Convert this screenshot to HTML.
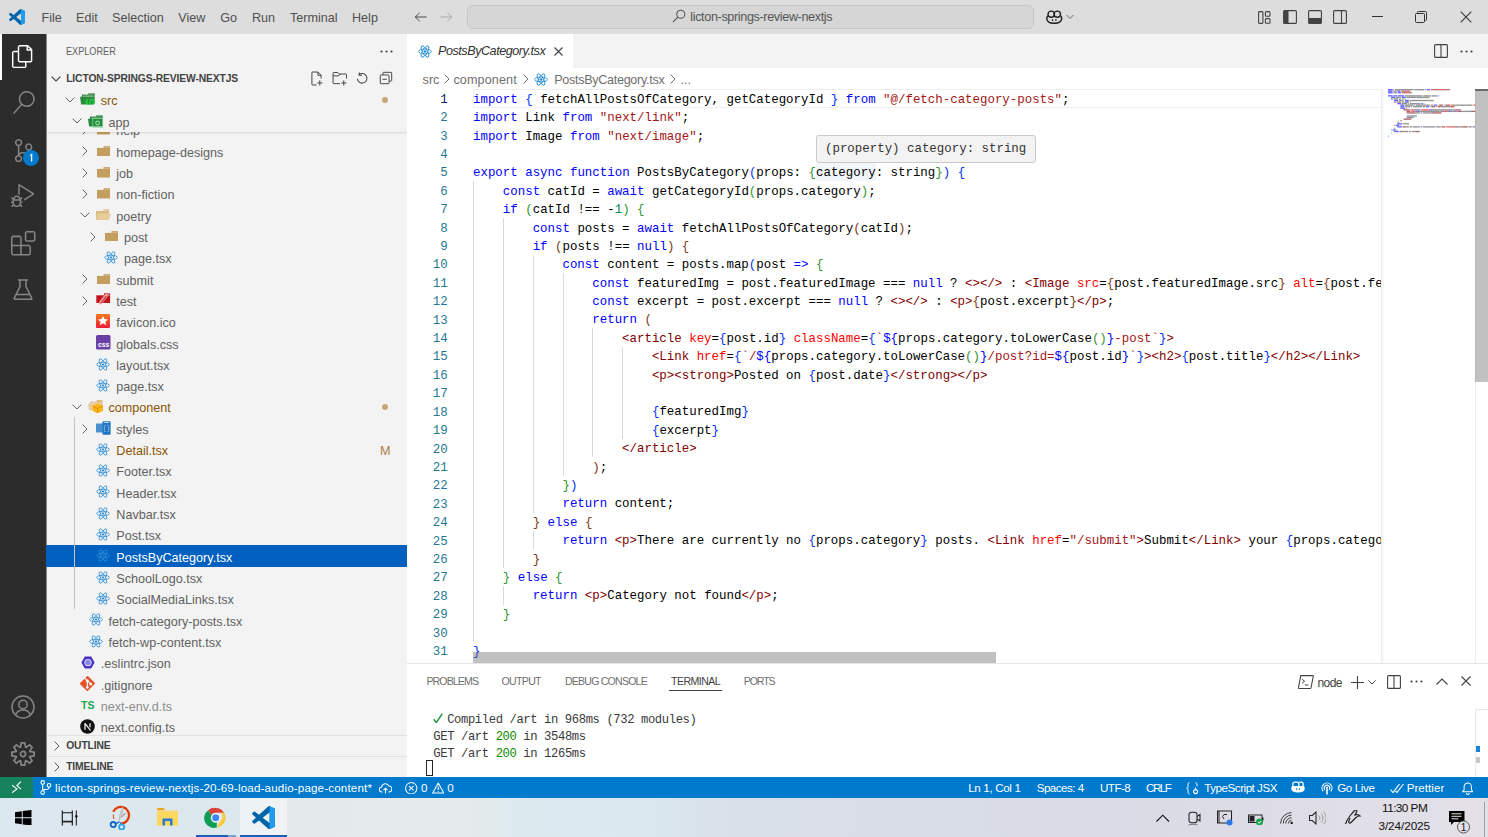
<!DOCTYPE html>
<html><head><meta charset="utf-8">
<style>
*{box-sizing:border-box;margin:0;padding:0}
html,body{width:1488px;height:837px;overflow:hidden;background:#fff;font-family:"Liberation Sans",sans-serif;position:relative}
.a{position:absolute}
svg{display:block}
#title{left:0;top:0;width:1488px;height:34px;background:#dddddd}
.menu{top:11px;font-size:12.6px;line-height:15px;color:#4f4f4f}
#act{left:0;top:34px;width:46px;height:743px;background:#2c2c2c}
#side{left:46px;top:34px;width:361px;height:743px;background:#f3f3f3;overflow:hidden}
#tabs{left:407px;top:34px;width:1081px;height:34px;background:#f3f3f3}
#editor{left:407px;top:68px;width:1081px;height:595px;background:#fff;overflow:hidden}
#panel{left:407px;top:663px;width:1081px;height:114px;background:#fff;border-top:1px solid #e5e5e5}
#status{left:0;top:777px;width:1488px;height:21px;background:#007acc}
#task{left:0;top:798px;width:1488px;height:39px;background:linear-gradient(90deg,#dbe7ee 0px,#dde8ee 240px,#e4e9ea 300px,#e5eaea 470px,#dceaf0 520px,#dae8ef 640px,#d9e0ea 730px,#d9dde8 900px,#d9dbe5 1150px,#e0dee7 1350px,#e3e0e8 1488px)}
</style></head><body>
<style>
.tx{font-size:12.6px;line-height:21.3px;white-space:nowrap}
.ic{width:16px;height:16px;display:flex;align-items:center;justify-content:center}
</style>
<style>
.bc{font-size:12.6px;line-height:15px;color:#6f6f6f;white-space:nowrap}
.code{font-family:"Liberation Mono",monospace;font-size:12.43px;white-space:pre;color:#000;width:908px;overflow:hidden}
.cl{height:18.406px;line-height:18.406px}
.ln{left:0;width:40.7px;text-align:right;font-family:"Liberation Mono",monospace;font-size:12.43px;line-height:18.406px}
.k{color:#0000ff}.b1{color:#0431fa}.b2{color:#319331}.b3{color:#7b3814}.s{color:#a31515}.n{color:#098658}.t{color:#800000}.at{color:#ff0000}
.hover{background:#f3f3f3;border:1px solid #c8c8c8;border-radius:3px;font-family:"Liberation Mono",monospace;font-size:12.43px;line-height:26px;padding-left:8px;color:#333;white-space:pre}
</style>
<style>
.term{font-family:"Liberation Mono",monospace;font-size:12.2px;letter-spacing:-0.39px;line-height:16.95px;color:#3a3a3a;white-space:pre}
</style>
<div id="title" class="a">
 <svg class="a" style="left:9px;top:9px" width="16" height="16" viewBox="0 0 100 100"><path fill="#0065a9" d="M96.5 10.8 75.9.9a6.2 6.2 0 0 0-7.1 1.2L29.4 38 12.2 25a4.1 4.1 0 0 0-5.3.2L1.4 30.3a4.1 4.1 0 0 0 0 6.1L16.3 50 1.4 63.6a4.1 4.1 0 0 0 0 6.1l5.5 5a4.1 4.1 0 0 0 5.3.2l17.2-13 39.4 35.9a6.2 6.2 0 0 0 7.1 1.2l20.6-9.9a6.2 6.2 0 0 0 3.5-5.6V16.4a6.2 6.2 0 0 0-3.5-5.6ZM75 72.7 45.1 50 75 27.3Z"/><path fill="#007acc" d="M96.5 89.2 75.9 99.1a6.2 6.2 0 0 1-7.1-1.2L75 72.7V27.3L68.8 2.1A6.2 6.2 0 0 1 75.9.9l20.6 9.9a6.2 6.2 0 0 1 3.5 5.6v67.2a6.2 6.2 0 0 1-3.5 5.6Z" opacity=".0"/><path fill="#1f9cf0" d="M75.9 99.1a6.2 6.2 0 0 1-7.1-1.2c2.3 2.3 6.2.7 6.2-2.6V4.7c0-3.3-3.9-4.9-6.2-2.6a6.2 6.2 0 0 1 7.1-1.2l20.6 9.9a6.2 6.2 0 0 1 3.5 5.6v67.2a6.2 6.2 0 0 1-3.5 5.6Z"/></svg>
 <div class="a menu" style="left:41.5px">File</div>
 <div class="a menu" style="left:76px">Edit</div>
 <div class="a menu" style="left:112px">Selection</div>
 <div class="a menu" style="left:178.3px">View</div>
 <div class="a menu" style="left:220.3px">Go</div>
 <div class="a menu" style="left:251.9px">Run</div>
 <div class="a menu" style="left:290px">Terminal</div>
 <div class="a menu" style="left:352px">Help</div>
 <svg class="a" style="left:414px;top:10px" width="14" height="14" viewBox="0 0 16 16"><path d="M1.5 8h13M1.5 8l5-5M1.5 8l5 5" stroke="#424242" stroke-width="1.1" fill="none"/></svg>
 <svg class="a" style="left:439px;top:10px" width="14" height="14" viewBox="0 0 16 16"><path d="M14.5 8h-13M14.5 8l-5-5M14.5 8l-5 5" stroke="#a8a8a8" stroke-width="1.1" fill="none"/></svg>
 <div class="a" style="left:467px;top:5px;width:567px;height:24px;border:1px solid #c6c6c6;border-radius:6px;background:#d6d6d6"></div>
 <svg class="a" style="left:672px;top:9px" width="14" height="14" viewBox="0 0 16 16"><circle cx="10" cy="6" r="4.6" stroke="#555" stroke-width="1.2" fill="none"/><path d="M6.7 9.3 1 15" stroke="#555" stroke-width="1.3"/></svg>
 <div class="a" style="left:690.3px;top:9.5px;font-size:12.6px;color:#555;line-height:15px;letter-spacing:-0.355px">licton-springs-review-nextjs</div>
 <svg class="a" style="left:1046px;top:10px" width="16.5" height="14" viewBox="0 0 16.5 14"><ellipse cx="5.2" cy="4.2" rx="3.2" ry="3.1" fill="none" stroke="#222" stroke-width="1.4"/><ellipse cx="11.3" cy="4.2" rx="3.2" ry="3.1" fill="none" stroke="#222" stroke-width="1.4"/><path d="M2 5.8C1 6.3.8 7.3.8 8.6c0 2.8 3.2 4.7 7.45 4.7s7.45-1.9 7.45-4.7c0-1.3-.2-2.3-1.2-2.8" fill="none" stroke="#222" stroke-width="1.5"/><path d="M6.6 9.2v1.8M9.9 9.2v1.8" stroke="#222" stroke-width="1.2"/></svg>
 <svg class="a" style="left:1066px;top:14px" width="8" height="6" viewBox="0 0 8 6"><path d="M.5 1 4 4.5 7.5 1" fill="none" stroke="#666" stroke-width="1"/></svg>
 <!-- layout icons -->
 <svg class="a" style="left:1258px;top:11px" width="13" height="13" viewBox="0 0 13 13"><rect x=".6" y=".6" width="4.3" height="11.8" rx=".8" fill="none" stroke="#424242" stroke-width="1.1"/><rect x="7.4" y=".6" width="4.6" height="4.6" rx="1" fill="none" stroke="#424242" stroke-width="1.1"/><rect x="7.4" y="7.6" width="4.6" height="4.6" rx="1" fill="none" stroke="#424242" stroke-width="1.1"/></svg>
 <svg class="a" style="left:1283px;top:10px" width="14" height="14" viewBox="0 0 14 14"><rect x=".6" y=".6" width="12.8" height="12.8" rx="1" fill="none" stroke="#424242" stroke-width="1.1"/><rect x="1" y="1" width="4.5" height="12" fill="#424242"/></svg>
 <svg class="a" style="left:1308px;top:10px" width="14" height="14" viewBox="0 0 14 14"><rect x=".6" y=".6" width="12.8" height="12.8" rx="1" fill="none" stroke="#424242" stroke-width="1.1"/><rect x="1" y="8" width="12" height="5" fill="#424242"/></svg>
 <svg class="a" style="left:1333px;top:10px" width="14" height="14" viewBox="0 0 14 14"><rect x=".6" y=".6" width="12.8" height="12.8" rx="1" fill="none" stroke="#424242" stroke-width="1.1"/><path d="M8.5 1v12" stroke="#424242" stroke-width="1.1"/></svg>
 <div class="a" style="left:1372px;top:16px;width:11px;height:1px;background:#333"></div>
 <svg class="a" style="left:1415px;top:11px" width="12" height="12" viewBox="0 0 12 12"><rect x=".5" y="2.5" width="9" height="9" rx="1" fill="none" stroke="#333" stroke-width="1"/><path d="M2.5 2.5V1.5a1 1 0 0 1 1-1h7a1 1 0 0 1 1 1v7a1 1 0 0 1-1 1h-1" fill="none" stroke="#333" stroke-width="1"/></svg>
 <svg class="a" style="left:1460px;top:11px" width="12" height="12" viewBox="0 0 12 12"><path d="M.7.7l10.6 10.6M11.3.7.7 11.3" stroke="#333" stroke-width="1.05"/></svg>
</div>
<div id="act" class="a">
 <div class="a" style="left:0;top:0;width:2px;height:46px;background:#fff"></div>
 <svg class="a" style="left:11px;top:11px" width="23.25" height="23.25" viewBox="0 0 24 24"><path fill="#fff" d="M17.5 0h-9L7 1.5V6H2.5L1 7.5v15.07L2.5 24h12.07L16 22.57V18h4.7l1.3-1.43V4.5L17.5 0zm0 2.12l2.38 2.38H17.5V2.12zm-3 20.38h-12v-15H7v9.07L8.5 18h6v4.5zm6-6h-12v-15H16V6h4.5v10.5z"/></svg>
 <svg class="a" style="left:12px;top:57px" width="23.25" height="23.25" viewBox="0 0 24 24"><path fill="#858585" d="M15.25 0a8.25 8.25 0 0 0-6.18 13.72L1 22.88l1.12 1 8.05-9.12A8.251 8.251 0 1 0 15.25.01V0zm0 15a6.75 6.75 0 1 1 0-13.5 6.75 6.75 0 0 1 0 13.5z"/></svg>
 <svg class="a" style="left:11.7px;top:105px" width="23.25" height="23.25" viewBox="0 0 24 24"><path fill="#858585" d="M21.007 8.222A3.738 3.738 0 0 0 15.045 5.2a3.737 3.737 0 0 0 1.156 6.583 2.988 2.988 0 0 1-2.668 1.67h-2.99a4.456 4.456 0 0 0-2.989 1.165V7.4a3.737 3.737 0 1 0-1.494 0v9.117a3.776 3.776 0 1 0 1.816.099 2.99 2.99 0 0 1 2.668-1.667h2.99a4.484 4.484 0 0 0 4.223-3.039 3.736 3.736 0 0 0 3.25-3.687zM4.565 3.738a2.242 2.242 0 1 1 4.484 0 2.242 2.242 0 0 1-4.484 0zm4.484 16.441a2.242 2.242 0 1 1-4.484 0 2.242 2.242 0 0 1 4.484 0zm8.221-9.715a2.242 2.242 0 1 1 0-4.485 2.242 2.242 0 0 1 0 4.485z"/></svg>
 <svg class="a" style="left:23px;top:116px" width="16" height="16" viewBox="0 0 16 16"><circle cx="8" cy="8" r="8" fill="#007acc"/><path d="M7.2 5.6 8.6 4.6V11.6" fill="none" stroke="#fff" stroke-width="1.3"/></svg>
 <svg class="a" style="left:11px;top:150px" width="23.25" height="23.25" viewBox="0 0 24 24"><path fill="#858585" d="M10.94 13.5l-1.32 1.32a3.73 3.73 0 0 0-7.24 0L1.06 13.5 0 14.56l1.72 1.72-.22.22V18H0v1.5h1.5v.08c.077.489.214.966.41 1.42L0 22.94 1.06 24l1.65-1.65A4.308 4.308 0 0 0 6 24a4.31 4.31 0 0 0 3.29-1.65L10.94 24 12 22.94 10.09 21c.198-.464.336-.951.41-1.45v-.1H12V18h-1.5v-1.5l-.22-.22L12 14.56l-1.06-1.06zM6 13.5a2.25 2.25 0 0 1 2.25 2.25h-4.5A2.25 2.25 0 0 1 6 13.5zm3 6a3.33 3.33 0 0 1-3 3 3.33 3.33 0 0 1-3-3v-2.25h6v2.25zm14.76-9.9v1.26L13.5 17.37V15.6l8.5-5.37L9 2v9.46a5.07 5.07 0 0 0-1.5-.72V.63L8.64 0l15.12 9.6z"/></svg>
 <svg class="a" style="left:11px;top:197px" width="24.5" height="24.5" viewBox="0 0 24 24"><path fill="#858585" d="M13.5 1.5L15 0h7.5L24 1.5V9l-1.5 1.5H15L13.5 9V1.5zm1.5 0V9h7.5V1.5H15zM0 15V6l1.5-1.5H9L10.5 6v7.5H18l1.5 1.5v7.5L18 24H1.5L0 22.5V15zm9-1.5V6H1.5v7.5H9zM9 15H1.5v7.5H9V15zm1.5 7.5H18V15h-7.5v7.5z"/></svg>
 <svg class="a" style="left:13px;top:245px" width="20" height="21" viewBox="0 0 20 21"><path d="M5 1h10M7 1v6.5L1.3 19.2c-.3.6.1 1.1.7 1.1h16c.6 0 1-.5.7-1.1L13 7.5V1M3.6 15.5h12.8" fill="none" stroke="#858585" stroke-width="1.5"/></svg>
 <svg class="a" style="left:11px;top:661px" width="24" height="24" viewBox="0 0 24 24"><circle cx="12" cy="12" r="11" fill="none" stroke="#858585" stroke-width="1.5"/><circle cx="12" cy="9.5" r="4.2" fill="none" stroke="#858585" stroke-width="1.5"/><path d="M4.5 19.8c1.3-3 4-4.8 7.5-4.8s6.2 1.8 7.5 4.8" fill="none" stroke="#858585" stroke-width="1.5"/></svg>
 <svg class="a" style="left:11px;top:708px" width="24" height="24" viewBox="0 0 24 24"><path fill="#858585" d="M19.85 8.75l4.15.83v4.84l-4.15.83 2.35 3.52-3.43 3.43-3.520-2.35-.83 4.15H9.58l-.83-4.15-3.52 2.35-3.43-3.43 2.35-3.52L0 14.42V9.58l4.15-.83L1.8 5.23 5.230 1.8l3.52 2.35L9.58 0h4.84l.83 4.15 3.52-2.350 3.43 3.43-2.35 3.52zm-1.57 5.07l4-.81v-2l-4-.81-.54-1.3 2.29-3.43-1.43-1.43-3.43 2.29-1.3-.54-.81-4h-2l-.81 4-1.3.54-3.43-2.29-1.43 1.43L6.38 8.9l-.54 1.3-4 .81v2l4 .81.54 1.3-2.29 3.43 1.43 1.43 3.43-2.29 1.3.54.81 4h2l.81-4 1.3-.54 3.43 2.29 1.43-1.43-2.29-3.43.54-1.3zm-8.186-4.672A3.43 3.43 0 0 1 12 8.57 3.44 3.44 0 0 1 15.43 12a3.430 3.43 0 1 1-5.336-2.852zm.956 4.274c.281.188.612.288.95.288A1.7 1.7 0 0 0 13.71 12a1.71 1.71 0 1 0-2.66 1.422z"/></svg>
</div>
<div id="side" class="a">
<div class="a" style="left:0;top:0;width:1px;height:743px;background:#8a8a8a"></div>
<div class="a" style="left:20px;top:11px;font-size:10.5px;line-height:12px;color:#616161;transform:scaleX(.87);transform-origin:0 0">EXPLORER</div>
<svg class="a" style="left:334px;top:16px" width="13" height="3" viewBox="0 0 13 3"><circle cx="1.5" cy="1.5" r="1.1" fill="#424242"/><circle cx="6.5" cy="1.5" r="1.1" fill="#424242"/><circle cx="11.5" cy="1.5" r="1.1" fill="#424242"/></svg>
<div class="a" style="left:0;top:55.1px;width:361px;height:645.4px;overflow:hidden">
<svg class="a" style="left:36.00px;top:36.04px" width="6" height="10" viewBox="0 0 6 10"><path d="M.6.6 5 5 .6 9.4" fill="none" stroke="#666" stroke-width="1"/></svg><div class="a ic" style="left:49.30px;top:32.54px"><svg width="13" height="10.5" viewBox="0 0 13 10.5"><path d="M6.6 0h5.5c.5 0 .9.4.9.9V2.2H6.6z" fill="#c39e5f"/><path d="M0 1.9h13v8.6H0z" fill="#c39e5f"/><path d="M7.4.7h4.8v.8H7.4z" fill="#f1e3c8" opacity=".8"/></svg></div><div class="a tx" style="left:70.30px;top:32.29px;color:#616161">help</div>
<svg class="a" style="left:36.00px;top:57.36px" width="6" height="10" viewBox="0 0 6 10"><path d="M.6.6 5 5 .6 9.4" fill="none" stroke="#666" stroke-width="1"/></svg><div class="a ic" style="left:49.30px;top:53.86px"><svg width="13" height="10.5" viewBox="0 0 13 10.5"><path d="M6.6 0h5.5c.5 0 .9.4.9.9V2.2H6.6z" fill="#c39e5f"/><path d="M0 1.9h13v8.6H0z" fill="#c39e5f"/><path d="M7.4.7h4.8v.8H7.4z" fill="#f1e3c8" opacity=".8"/></svg></div><div class="a tx" style="left:70.30px;top:53.60px;color:#616161">homepage-designs</div>
<svg class="a" style="left:36.00px;top:78.67px" width="6" height="10" viewBox="0 0 6 10"><path d="M.6.6 5 5 .6 9.4" fill="none" stroke="#666" stroke-width="1"/></svg><div class="a ic" style="left:49.30px;top:75.17px"><svg width="13" height="10.5" viewBox="0 0 13 10.5"><path d="M6.6 0h5.5c.5 0 .9.4.9.9V2.2H6.6z" fill="#c39e5f"/><path d="M0 1.9h13v8.6H0z" fill="#c39e5f"/><path d="M7.4.7h4.8v.8H7.4z" fill="#f1e3c8" opacity=".8"/></svg></div><div class="a tx" style="left:70.30px;top:74.91px;color:#616161">job</div>
<svg class="a" style="left:36.00px;top:99.98px" width="6" height="10" viewBox="0 0 6 10"><path d="M.6.6 5 5 .6 9.4" fill="none" stroke="#666" stroke-width="1"/></svg><div class="a ic" style="left:49.30px;top:96.48px"><svg width="13" height="10.5" viewBox="0 0 13 10.5"><path d="M6.6 0h5.5c.5 0 .9.4.9.9V2.2H6.6z" fill="#c39e5f"/><path d="M0 1.9h13v8.6H0z" fill="#c39e5f"/><path d="M7.4.7h4.8v.8H7.4z" fill="#f1e3c8" opacity=".8"/></svg></div><div class="a tx" style="left:70.30px;top:96.23px;color:#616161">non-fiction</div>
<svg class="a" style="left:34.00px;top:122.79px" width="10" height="6" viewBox="0 0 10 6"><path d="M.6.6 5 5 9.4.6" fill="none" stroke="#666" stroke-width="1"/></svg><div class="a ic" style="left:49.30px;top:117.79px"><svg width="15" height="11" viewBox="0 0 15 11"><path d="M0 2h13v9H0z" fill="#dcbc83"/><path d="M7.5 0h4.8c.5 0 .9.4.9.9V2H7.5z" fill="#dcbc83"/><path d="M8.2.7h4.2v.9H8.2z" fill="#f5ead3"/><path d="M1.5 4.5h13.3L13 11H0z" fill="#e6cd9a"/></svg></div><div class="a tx" style="left:70.30px;top:117.54px;color:#616161">poetry</div>
<svg class="a" style="left:43.75px;top:142.61px" width="6" height="10" viewBox="0 0 6 10"><path d="M.6.6 5 5 .6 9.4" fill="none" stroke="#666" stroke-width="1"/></svg><div class="a ic" style="left:57.05px;top:139.11px"><svg width="13" height="10.5" viewBox="0 0 13 10.5"><path d="M6.6 0h5.5c.5 0 .9.4.9.9V2.2H6.6z" fill="#c39e5f"/><path d="M0 1.9h13v8.6H0z" fill="#c39e5f"/><path d="M7.4.7h4.8v.8H7.4z" fill="#f1e3c8" opacity=".8"/></svg></div><div class="a tx" style="left:78.05px;top:138.85px;color:#616161">post</div>
<div class="a ic" style="left:57.05px;top:160.42px"><svg width="14" height="13" viewBox="-12 -11 24 22"><g fill="none" stroke="#2d8ed8" stroke-width="1.35"><ellipse rx="11" ry="3.9"/><ellipse rx="11" ry="3.9" transform="rotate(60)"/><ellipse rx="11" ry="3.9" transform="rotate(120)"/></g><circle r="1.9" fill="#1a7fd0"/></svg></div><div class="a tx" style="left:78.05px;top:160.16px;color:#616161">page.tsx</div>
<svg class="a" style="left:36.00px;top:185.23px" width="6" height="10" viewBox="0 0 6 10"><path d="M.6.6 5 5 .6 9.4" fill="none" stroke="#666" stroke-width="1"/></svg><div class="a ic" style="left:49.30px;top:181.73px"><svg width="13" height="10.5" viewBox="0 0 13 10.5"><path d="M6.6 0h5.5c.5 0 .9.4.9.9V2.2H6.6z" fill="#c39e5f"/><path d="M0 1.9h13v8.6H0z" fill="#c39e5f"/><path d="M7.4.7h4.8v.8H7.4z" fill="#f1e3c8" opacity=".8"/></svg></div><div class="a tx" style="left:70.30px;top:181.48px;color:#616161">submit</div>
<svg class="a" style="left:36.00px;top:206.54px" width="6" height="10" viewBox="0 0 6 10"><path d="M.6.6 5 5 .6 9.4" fill="none" stroke="#666" stroke-width="1"/></svg><div class="a ic" style="left:49.30px;top:203.04px"><svg width="15" height="14" viewBox="0 0 15 14"><path d="M8 .3h5.3c.5 0 .8.3.8.8V2H8z" fill="#c0121c"/><path d="M9 .8h4v.9H9z" fill="#f6c5c8"/><path d="M.3 2.3h13.8V10H.3z" fill="#c0121c"/><path d="M12.2 2.8 6 10.8c-.8 1-2 1.2-2.8.6-.8-.6-.8-1.7 0-2.7l6.2-8" fill="#f4a9ae" opacity=".85"/><path d="M10.3 3.3 4.8 10.4" stroke="#c0121c" stroke-width=".9"/></svg></div><div class="a tx" style="left:70.30px;top:202.79px;color:#616161">test</div>
<div class="a ic" style="left:49.30px;top:224.36px"><svg width="14" height="14" viewBox="0 0 14.5 14.5"><defs><linearGradient id="fg" x1="0" y1="0" x2="0" y2="1"><stop offset="0" stop-color="#f47a1c"/><stop offset="1" stop-color="#ee1c3a"/></linearGradient></defs><rect width="14.5" height="14.5" rx="1" fill="url(#fg)"/><path d="M7.25 2 8.8 5.2l3.6.4-2.7 2.4.8 3.6-3.25-1.9L4 11.6l.8-3.6-2.7-2.4 3.6-.4z" fill="#fff"/></svg></div><div class="a tx" style="left:70.30px;top:224.10px;color:#616161">favicon.ico</div>
<div class="a ic" style="left:49.30px;top:245.67px"><svg width="15" height="15" viewBox="0 0 15 15"><rect width="14.5" height="14.5" rx="1.5" fill="#6a3fa6"/><text x="7.6" y="12" font-family="Liberation Sans" font-size="6.8" font-weight="bold" fill="#fff" text-anchor="middle">css</text></svg></div><div class="a tx" style="left:70.30px;top:245.41px;color:#616161">globals.css</div>
<div class="a ic" style="left:49.30px;top:266.98px"><svg width="14" height="13" viewBox="-12 -11 24 22"><g fill="none" stroke="#2d8ed8" stroke-width="1.35"><ellipse rx="11" ry="3.9"/><ellipse rx="11" ry="3.9" transform="rotate(60)"/><ellipse rx="11" ry="3.9" transform="rotate(120)"/></g><circle r="1.9" fill="#1a7fd0"/></svg></div><div class="a tx" style="left:70.30px;top:266.73px;color:#616161">layout.tsx</div>
<div class="a ic" style="left:49.30px;top:288.29px"><svg width="14" height="13" viewBox="-12 -11 24 22"><g fill="none" stroke="#2d8ed8" stroke-width="1.35"><ellipse rx="11" ry="3.9"/><ellipse rx="11" ry="3.9" transform="rotate(60)"/><ellipse rx="11" ry="3.9" transform="rotate(120)"/></g><circle r="1.9" fill="#1a7fd0"/></svg></div><div class="a tx" style="left:70.30px;top:288.04px;color:#616161">page.tsx</div>
<svg class="a" style="left:26.25px;top:314.61px" width="10" height="6" viewBox="0 0 10 6"><path d="M.6.6 5 5 9.4.6" fill="none" stroke="#666" stroke-width="1"/></svg><div class="a ic" style="left:41.55px;top:309.61px"><svg width="16" height="13" viewBox="0 0 16 13"><path d="M8.5 0h5.3c.5 0 .8.3.8.8V2H8.5z" fill="#dcbd8a"/><path d="M2 1.6h12.6V9H2z" fill="#dcbd8a"/><path d="M3 2.7h10.8v.9H3z" fill="#f5e8d2"/><path d="M0 3.8h13l.4 6.5H1.1z" fill="#e8cc9b"/><path d="M9.5 3.3 15 6v4.8l-5.5 2.7L4.5 10.8V6z" fill="#f6b514"/><path d="M4.5 6 9.5 8.5 15 6M9.5 8.5v5" fill="none" stroke="#f08c0a" stroke-width=".9"/></svg></div><div class="a tx" style="left:62.55px;top:309.35px;color:#895503">component</div><div class="a" style="left:336px;top:314.61px;width:6px;height:6px;border-radius:50%;background:#c6a77a"></div>
<svg class="a" style="left:36.00px;top:334.42px" width="6" height="10" viewBox="0 0 6 10"><path d="M.6.6 5 5 .6 9.4" fill="none" stroke="#666" stroke-width="1"/></svg><div class="a ic" style="left:49.30px;top:330.92px"><svg width="15" height="14" viewBox="0 0 15 14"><path d="M0 2.5h9v9H0z" fill="#4a8fd0"/><path d="M6.5 1.5c0-.8.5-1.3 1.3-1.3h5.5c.8 0 1.3.5 1.3 1.3V13c0 .5-.4.8-.9.8H7.4c-.5 0-.9-.3-.9-.8z" fill="#1f74c4"/><path d="M8.2.9h4.8v1H8.2z" fill="#cfe3f5"/><path d="M9.4 4.2c-.7.3-.9.9-.9 1.6v1c0 .4-.2.7-.6.8.4.1.6.4.6.8v1c0 .7.2 1.3.9 1.6M11.6 4.2c.7.3.9.9.9 1.6v1c0 .4.2.7.6.8-.4.1-.6.4-.6.8v1c0 .7-.2 1.3-.9 1.6" fill="none" stroke="#d6e8f8" stroke-width=".9" stroke-dasharray="1 .6"/></svg></div><div class="a tx" style="left:70.30px;top:330.66px;color:#616161">styles</div>
<div class="a ic" style="left:49.30px;top:352.23px"><svg width="14" height="13" viewBox="-12 -11 24 22"><g fill="none" stroke="#2d8ed8" stroke-width="1.35"><ellipse rx="11" ry="3.9"/><ellipse rx="11" ry="3.9" transform="rotate(60)"/><ellipse rx="11" ry="3.9" transform="rotate(120)"/></g><circle r="1.9" fill="#1a7fd0"/></svg></div><div class="a tx" style="left:70.30px;top:351.98px;color:#895503">Detail.tsx</div><div class="a tx" style="left:334px;top:351.98px;color:#a9834c">M</div>
<div class="a ic" style="left:49.30px;top:373.54px"><svg width="14" height="13" viewBox="-12 -11 24 22"><g fill="none" stroke="#2d8ed8" stroke-width="1.35"><ellipse rx="11" ry="3.9"/><ellipse rx="11" ry="3.9" transform="rotate(60)"/><ellipse rx="11" ry="3.9" transform="rotate(120)"/></g><circle r="1.9" fill="#1a7fd0"/></svg></div><div class="a tx" style="left:70.30px;top:373.29px;color:#616161">Footer.tsx</div>
<div class="a ic" style="left:49.30px;top:394.86px"><svg width="14" height="13" viewBox="-12 -11 24 22"><g fill="none" stroke="#2d8ed8" stroke-width="1.35"><ellipse rx="11" ry="3.9"/><ellipse rx="11" ry="3.9" transform="rotate(60)"/><ellipse rx="11" ry="3.9" transform="rotate(120)"/></g><circle r="1.9" fill="#1a7fd0"/></svg></div><div class="a tx" style="left:70.30px;top:394.60px;color:#616161">Header.tsx</div>
<div class="a ic" style="left:49.30px;top:416.17px"><svg width="14" height="13" viewBox="-12 -11 24 22"><g fill="none" stroke="#2d8ed8" stroke-width="1.35"><ellipse rx="11" ry="3.9"/><ellipse rx="11" ry="3.9" transform="rotate(60)"/><ellipse rx="11" ry="3.9" transform="rotate(120)"/></g><circle r="1.9" fill="#1a7fd0"/></svg></div><div class="a tx" style="left:70.30px;top:415.91px;color:#616161">Navbar.tsx</div>
<div class="a ic" style="left:49.30px;top:437.48px"><svg width="14" height="13" viewBox="-12 -11 24 22"><g fill="none" stroke="#2d8ed8" stroke-width="1.35"><ellipse rx="11" ry="3.9"/><ellipse rx="11" ry="3.9" transform="rotate(60)"/><ellipse rx="11" ry="3.9" transform="rotate(120)"/></g><circle r="1.9" fill="#1a7fd0"/></svg></div><div class="a tx" style="left:70.30px;top:437.22px;color:#616161">Post.tsx</div>
<div class="a" style="left:0;top:456.14px;width:361px;height:21.31px;background:#0060c0"></div><div class="a ic" style="left:49.30px;top:458.79px"><svg width="14" height="13" viewBox="-12 -11 24 22"><g fill="none" stroke="#2d8ed8" stroke-width="1.35"><ellipse rx="11" ry="3.9"/><ellipse rx="11" ry="3.9" transform="rotate(60)"/><ellipse rx="11" ry="3.9" transform="rotate(120)"/></g><circle r="1.9" fill="#1a7fd0"/></svg></div><div class="a tx" style="left:70.30px;top:458.54px;color:#ffffff">PostsByCategory.tsx</div>
<div class="a ic" style="left:49.30px;top:480.11px"><svg width="14" height="13" viewBox="-12 -11 24 22"><g fill="none" stroke="#2d8ed8" stroke-width="1.35"><ellipse rx="11" ry="3.9"/><ellipse rx="11" ry="3.9" transform="rotate(60)"/><ellipse rx="11" ry="3.9" transform="rotate(120)"/></g><circle r="1.9" fill="#1a7fd0"/></svg></div><div class="a tx" style="left:70.30px;top:479.85px;color:#616161">SchoolLogo.tsx</div>
<div class="a ic" style="left:49.30px;top:501.42px"><svg width="14" height="13" viewBox="-12 -11 24 22"><g fill="none" stroke="#2d8ed8" stroke-width="1.35"><ellipse rx="11" ry="3.9"/><ellipse rx="11" ry="3.9" transform="rotate(60)"/><ellipse rx="11" ry="3.9" transform="rotate(120)"/></g><circle r="1.9" fill="#1a7fd0"/></svg></div><div class="a tx" style="left:70.30px;top:501.16px;color:#616161">SocialMediaLinks.tsx</div>
<div class="a ic" style="left:41.55px;top:522.73px"><svg width="14" height="13" viewBox="-12 -11 24 22"><g fill="none" stroke="#2d8ed8" stroke-width="1.35"><ellipse rx="11" ry="3.9"/><ellipse rx="11" ry="3.9" transform="rotate(60)"/><ellipse rx="11" ry="3.9" transform="rotate(120)"/></g><circle r="1.9" fill="#1a7fd0"/></svg></div><div class="a tx" style="left:62.55px;top:522.47px;color:#616161">fetch-category-posts.tsx</div>
<div class="a ic" style="left:41.55px;top:544.04px"><svg width="14" height="13" viewBox="-12 -11 24 22"><g fill="none" stroke="#2d8ed8" stroke-width="1.35"><ellipse rx="11" ry="3.9"/><ellipse rx="11" ry="3.9" transform="rotate(60)"/><ellipse rx="11" ry="3.9" transform="rotate(120)"/></g><circle r="1.9" fill="#1a7fd0"/></svg></div><div class="a tx" style="left:62.55px;top:543.79px;color:#616161">fetch-wp-content.tsx</div>
<div class="a ic" style="left:33.80px;top:565.36px"><svg width="14" height="13" viewBox="0 0 15 14"><path d="M4 .5h7l3.6 6.5L11 13.5H4L.4 7z" fill="#4b32c3"/><circle cx="7.5" cy="7" r="3.9" fill="#e8e6fb"/><circle cx="7.5" cy="7" r="3" fill="#8b86f5"/></svg></div><div class="a tx" style="left:54.80px;top:565.10px;color:#616161">.eslintrc.json</div>
<div class="a ic" style="left:33.80px;top:586.67px"><svg width="15" height="15" viewBox="0 0 15 15"><path d="M14.5 6.6 8.4.5a1.2 1.2 0 0 0-1.7 0L5.4 1.8l1.6 1.6a1.4 1.4 0 0 1 1.8 1.8l1.6 1.6a1.4 1.4 0 1 1-.9.8L8 6.2v4a1.4 1.4 0 1 1-1.2 0v-4a1.4 1.4 0 0 1-.8-1.9L4.5 2.7.4 6.8a1.2 1.2 0 0 0 0 1.7l6.1 6.1a1.2 1.2 0 0 0 1.7 0l6.3-6.3a1.2 1.2 0 0 0 0-1.7z" fill="#e4522c"/></svg></div><div class="a tx" style="left:54.80px;top:586.41px;color:#616161">.gitignore</div>
<div class="a ic" style="left:33.80px;top:607.98px"><div style="font-size:10.5px;font-weight:bold;color:#1ca750;letter-spacing:0px;line-height:12px">TS</div></div><div class="a tx" style="left:54.80px;top:607.72px;color:#8e8e90">next-env.d.ts</div>
<div class="a ic" style="left:33.80px;top:629.29px"><svg width="15" height="15" viewBox="0 0 15 15"><circle cx="7.5" cy="7.5" r="7.3" fill="#111"/><path d="M5 4.3v6.4M5 4.3l5.5 7.2M10 4.3v4" stroke="#fff" stroke-width="1.2" fill="none"/></svg></div><div class="a tx" style="left:54.80px;top:629.04px;color:#616161">next.config.ts</div>
<div class="a" style="left:28px;top:328.26px;width:1px;height:191.81px;background:#c3c3c3"></div>
<div class="a" style="left:1px;top:0;width:360px;height:43.12px;background:#f3f3f3;box-shadow:0 1px 2px rgba(0,0,0,.12)"></div>
<svg class="a" style="left:18.50px;top:7.66px" width="10" height="6" viewBox="0 0 10 6"><path d="M.6.6 5 5 9.4.6" fill="none" stroke="#666" stroke-width="1"/></svg><div class="a ic" style="left:33.80px;top:2.66px"><svg width="16" height="13" viewBox="0 0 16 13"><path d="M8.5 0h5.3c.5 0 .8.3.8.8V2H8.5z" fill="#2b7a3b"/><path d="M9.2.5h4.6v.9H9.2z" fill="#d8eedc"/><path d="M2 1.6h12.6V11H2z" fill="#2b7a3b"/><path d="M3 2.7h10.8v.9H3z" fill="#d8eedc"/><path d="M0 3.8h13.8l.4 7.7H1.1z" fill="#2f8a41"/><path d="M8.2 6.2 5.9 8.8l2.3 2.6M12.2 6.2l2.3 2.6-2.3 2.6M11 5.6 9.4 12.2" fill="none" stroke="#1fd53b" stroke-width="1.4"/></svg></div><div class="a tx" style="left:54.80px;top:2.40px;color:#895503">src</div><div class="a" style="left:336px;top:7.66px;width:6px;height:6px;border-radius:50%;background:#c6a77a"></div>
<svg class="a" style="left:26.25px;top:28.97px" width="10" height="6" viewBox="0 0 10 6"><path d="M.6.6 5 5 9.4.6" fill="none" stroke="#666" stroke-width="1"/></svg><div class="a ic" style="left:41.55px;top:23.97px"><svg width="16" height="13" viewBox="0 0 16 13"><path d="M8.5 0h5.3c.5 0 .8.3.8.8V2H8.5z" fill="#1f7a35"/><path d="M9.2.5h4.6v.9H9.2z" fill="#d8eedc"/><path d="M2 1.6h12.6V11H2z" fill="#1f7a35"/><path d="M3 2.7h10.8v.9H3z" fill="#9fd8ad"/><path d="M0 3.8h13.8l.4 7.7H1.1z" fill="#238a3c"/><rect x="4.8" y="3.4" width="10" height="9.2" fill="none" stroke="#8fdca5" stroke-width=".9" opacity=".8"/><circle cx="9.6" cy="8" r="1.9" fill="none" stroke="#8fdca5" stroke-width="1.1"/></svg></div><div class="a tx" style="left:62.55px;top:23.71px;color:#616161">app</div>
</div>
<svg class="a" style="left:5.4px;top:42.3px" width="10" height="6" viewBox="0 0 10 6"><path d="M.6.6 5 5 9.4.6" fill="none" stroke="#424242" stroke-width="1.1"/></svg>
<div class="a" style="left:20.2px;top:38.2px;font-size:10.3px;line-height:13px;font-weight:bold;color:#424242;letter-spacing:-0.12px">LICTON-SPRINGS-REVIEW-NEXTJS</div>
<svg class="a" style="left:263px;top:37px" width="15" height="15" viewBox="0 0 16 16"><path d="M9.5 1.1H3.6c-.3 0-.5.2-.5.5v12.8c0 .3.2.5.5.5H8M9.5 1.1l3.4 3.4V8M9.5 1.1v3.4h3.4M11.5 10v5.5M8.8 12.75h5.5" fill="none" stroke="#424242" stroke-width="1.05"/></svg>
<svg class="a" style="left:286px;top:37px" width="16" height="15" viewBox="0 0 17 16"><path d="M8.5 13.5H1.8c-.4 0-.7-.3-.7-.7V2.3c0-.4.3-.7.7-.7h4.3l1.6 1.6h7c.4 0 .7.3.7.7V8M1.1 5.2h6l1.6-2M12.5 10v5.5M9.75 12.75h5.5" fill="none" stroke="#424242" stroke-width="1.05"/></svg>
<svg class="a" style="left:309px;top:37px;transform:scaleX(-1)" width="14" height="15" viewBox="0 0 16 16"><path d="M13.3 8.5A5.5 5.5 0 1 1 11.2 3.4M11.2 1v3.2H8" fill="none" stroke="#424242" stroke-width="1.15"/></svg>
<svg class="a" style="left:333px;top:37px" width="14" height="14" viewBox="0 0 16 16"><path d="M4.5 4.5V2.2c0-.4.3-.7.7-.7h8.6c.4 0 .7.3.7.7v8.6c0 .4-.3.7-.7.7H11.5" fill="none" stroke="#424242" stroke-width="1.1"/><rect x="1.5" y="4.5" width="10" height="10" rx=".7" fill="none" stroke="#424242" stroke-width="1.1"/><path d="M4 9.5h5" stroke="#424242" stroke-width="1.1"/></svg>
<div class="a" style="left:1px;top:700.50px;width:360px;height:1px;background:#e0e0e0"></div>
<svg class="a" style="left:8px;top:706.70px" width="6" height="10" viewBox="0 0 6 10"><path d="M.6.6 5 5 .6 9.4" fill="none" stroke="#5a5a5a" stroke-width="1"/></svg>
<div class="a" style="left:20.2px;top:705.00px;font-size:10.3px;line-height:13px;font-weight:bold;color:#424242;letter-spacing:-0.12px">OUTLINE</div>
<div class="a" style="left:1px;top:721.80px;width:360px;height:1px;background:#e0e0e0"></div>
<svg class="a" style="left:8px;top:728.00px" width="6" height="10" viewBox="0 0 6 10"><path d="M.6.6 5 5 .6 9.4" fill="none" stroke="#5a5a5a" stroke-width="1"/></svg>
<div class="a" style="left:20.2px;top:726.30px;font-size:10.3px;line-height:13px;font-weight:bold;color:#424242;letter-spacing:-0.12px">TIMELINE</div>
</div>
<div id="tabs" class="a">
 <div class="a" style="left:0;top:0;width:166px;height:34px;background:#fff"></div>
 <div class="a" style="left:11px;top:11px"><svg width="14" height="13" viewBox="-12 -11 24 22"><g fill="none" stroke="#1f8ad2" stroke-width="1.5"><ellipse rx="11" ry="4.2"/><ellipse rx="11" ry="4.2" transform="rotate(60)"/><ellipse rx="11" ry="4.2" transform="rotate(120)"/></g><circle r="2.2" fill="#1f8ad2"/></svg></div>
 <div class="a" style="left:31px;top:10px;font-size:12.6px;line-height:15px;font-style:italic;color:#333;letter-spacing:-0.458px">PostsByCategory.tsx</div>
 <svg class="a" style="left:147px;top:13px" width="9" height="9" viewBox="0 0 9 9"><path d="M.5.5l8 8M8.5.5l-8 8" stroke="#424242" stroke-width="1.1"/></svg>
 <svg class="a" style="left:1027px;top:10px" width="14" height="14" viewBox="0 0 14 14"><rect x=".6" y=".6" width="12.8" height="12.8" rx="1" fill="none" stroke="#424242" stroke-width="1.1"/><path d="M7 1v12" stroke="#424242" stroke-width="1.1"/></svg>
 <svg class="a" style="left:1053px;top:16px" width="13" height="3" viewBox="0 0 13 3"><circle cx="1.5" cy="1.5" r="1.1" fill="#424242"/><circle cx="6.5" cy="1.5" r="1.1" fill="#424242"/><circle cx="11.5" cy="1.5" r="1.1" fill="#424242"/></svg>
</div>
<div id="editor" class="a">
<div class="a bc" style="left:15.6px;top:4.5px">src</div>
<svg class="a" style="left:36.5px;top:6px" width="6" height="10" viewBox="0 0 6 10"><path d="M.6.6 5 5 .6 9.4" fill="none" stroke="#717171" stroke-width="1"/></svg>
<div class="a bc" style="left:46.4px;top:4.5px;letter-spacing:0.129px">component</div>
<svg class="a" style="left:115.8px;top:6px" width="6" height="10" viewBox="0 0 6 10"><path d="M.6.6 5 5 .6 9.4" fill="none" stroke="#717171" stroke-width="1"/></svg>
<div class="a" style="left:127px;top:4.5px"><svg width="14" height="13" viewBox="-12 -11 24 22"><g fill="none" stroke="#1f8ad2" stroke-width="1.5"><ellipse rx="11" ry="4.2"/><ellipse rx="11" ry="4.2" transform="rotate(60)"/><ellipse rx="11" ry="4.2" transform="rotate(120)"/></g><circle r="2.2" fill="#1f8ad2"/></svg></div>
<div class="a bc" style="left:147.2px;top:4.5px;letter-spacing:-0.301px">PostsByCategory.tsx</div>
<svg class="a" style="left:263px;top:6px" width="6" height="10" viewBox="0 0 6 10"><path d="M.6.6 5 5 .6 9.4" fill="none" stroke="#717171" stroke-width="1"/></svg>
<div class="a bc" style="left:273.6px;top:4.5px">...</div>
<div class="a" style="left:66px;top:21.20px;width:908px;height:18.41px;border:1px solid #eeeeee;border-right:none"></div>
<div class="a" style="left:409.08px;top:94.82px;width:59.67px;height:18.41px;background:#f2f6fa"></div>
<div class="a" style="left:66.00px;top:113.23px;width:1px;height:460.15px;background:#d9d9d9"></div>
<div class="a" style="left:95.83px;top:150.04px;width:1px;height:349.71px;background:#d9d9d9"></div>
<div class="a" style="left:125.67px;top:186.85px;width:1px;height:257.68px;background:#d9d9d9"></div>
<div class="a" style="left:155.50px;top:205.26px;width:1px;height:202.47px;background:#d9d9d9"></div>
<div class="a" style="left:185.33px;top:260.48px;width:1px;height:128.84px;background:#d9d9d9"></div>
<div class="a" style="left:215.17px;top:278.88px;width:1px;height:92.03px;background:#d9d9d9"></div>
<div class="a" style="left:125.67px;top:462.94px;width:1px;height:18.41px;background:#d9d9d9"></div>
<div class="a" style="left:95.83px;top:518.16px;width:1px;height:18.41px;background:#d9d9d9"></div>
<div class="a ln" style="top:22.80px;color:#0b216f">1</div>
<div class="a ln" style="top:41.21px;color:#237893">2</div>
<div class="a ln" style="top:59.61px;color:#237893">3</div>
<div class="a ln" style="top:78.02px;color:#237893">4</div>
<div class="a ln" style="top:96.42px;color:#237893">5</div>
<div class="a ln" style="top:114.83px;color:#237893">6</div>
<div class="a ln" style="top:133.24px;color:#237893">7</div>
<div class="a ln" style="top:151.64px;color:#237893">8</div>
<div class="a ln" style="top:170.05px;color:#237893">9</div>
<div class="a ln" style="top:188.45px;color:#237893">10</div>
<div class="a ln" style="top:206.86px;color:#237893">11</div>
<div class="a ln" style="top:225.27px;color:#237893">12</div>
<div class="a ln" style="top:243.67px;color:#237893">13</div>
<div class="a ln" style="top:262.08px;color:#237893">14</div>
<div class="a ln" style="top:280.48px;color:#237893">15</div>
<div class="a ln" style="top:298.89px;color:#237893">16</div>
<div class="a ln" style="top:317.30px;color:#237893">17</div>
<div class="a ln" style="top:335.70px;color:#237893">18</div>
<div class="a ln" style="top:354.11px;color:#237893">19</div>
<div class="a ln" style="top:372.51px;color:#237893">20</div>
<div class="a ln" style="top:390.92px;color:#237893">21</div>
<div class="a ln" style="top:409.33px;color:#237893">22</div>
<div class="a ln" style="top:427.73px;color:#237893">23</div>
<div class="a ln" style="top:446.14px;color:#237893">24</div>
<div class="a ln" style="top:464.54px;color:#237893">25</div>
<div class="a ln" style="top:482.95px;color:#237893">26</div>
<div class="a ln" style="top:501.36px;color:#237893">27</div>
<div class="a ln" style="top:519.76px;color:#237893">28</div>
<div class="a ln" style="top:538.17px;color:#237893">29</div>
<div class="a ln" style="top:556.57px;color:#237893">30</div>
<div class="a ln" style="top:574.98px;color:#237893">31</div>
<div class="a code" style="left:66px;top:22.80px"><div class="cl"><span class="k">import</span> <span class="b1">{</span> fetchAllPostsOfCategory, getCategoryId <span class="b1">}</span> <span class="k">from</span> <span class="s">&quot;@/fetch-category-posts&quot;</span>;</div><div class="cl"><span class="k">import</span> Link <span class="k">from</span> <span class="s">&quot;next/link&quot;</span>;</div><div class="cl"><span class="k">import</span> Image <span class="k">from</span> <span class="s">&quot;next/image&quot;</span>;</div><div class="cl"></div><div class="cl"><span class="k">export</span> <span class="k">async</span> <span class="k">function</span> PostsByCategory<span class="b1">(</span>props: <span class="b2">{</span>category: string<span class="b2">}</span><span class="b1">)</span> <span class="b1">{</span></div><div class="cl">    <span class="k">const</span> catId = <span class="k">await</span> getCategoryId<span class="b2">(</span>props.category<span class="b2">)</span>;</div><div class="cl">    <span class="k">if</span> <span class="b2">(</span>catId !== -<span class="n">1</span><span class="b2">)</span> <span class="b2">{</span></div><div class="cl">        <span class="k">const</span> posts = <span class="k">await</span> fetchAllPostsOfCategory<span class="b3">(</span>catId<span class="b3">)</span>;</div><div class="cl">        <span class="k">if</span> <span class="b3">(</span>posts !== <span class="k">null</span><span class="b3">)</span> <span class="b3">{</span></div><div class="cl">            <span class="k">const</span> content = posts.map<span class="b1">(</span>post <span class="k">=&gt;</span> <span class="b2">{</span></div><div class="cl">                <span class="k">const</span> featuredImg = post.featuredImage === <span class="k">null</span> ? <span class="t">&lt;&gt;&lt;/&gt;</span> : <span class="t">&lt;Image</span> <span class="at">src</span>=<span class="b3">{</span>post.featuredImage.src<span class="b3">}</span> <span class="at">alt</span>=<span class="b3">{</span>post.featuredImage.alt<span class="b3">}</span> <span class="at">width</span>=<span class="b3">{</span>300<span class="b3">}</span> <span class="at">height</span>=<span class="b3">{</span>200<span class="b3">}</span> <span class="t">/&gt;</span>;</div><div class="cl">                <span class="k">const</span> excerpt = post.excerpt === <span class="k">null</span> ? <span class="t">&lt;&gt;&lt;/&gt;</span> : <span class="t">&lt;p&gt;</span><span class="b3">{</span>post.excerpt<span class="b3">}</span><span class="t">&lt;/p&gt;</span>;</div><div class="cl">                <span class="k">return</span> <span class="b3">(</span></div><div class="cl">                    <span class="t">&lt;article</span> <span class="at">key</span>=<span class="b1">{</span>post.id<span class="b1">}</span> <span class="at">className</span>=<span class="b1">{</span><span class="s">`</span><span class="k">${</span>props.category.toLowerCase<span class="b2">()</span><span class="k">}</span><span class="s">-post`</span><span class="b1">}</span><span class="t">&gt;</span></div><div class="cl">                        <span class="t">&lt;Link</span> <span class="at">href</span>=<span class="b1">{</span><span class="s">`/</span><span class="k">${</span>props.category.toLowerCase<span class="b2">()</span><span class="k">}</span><span class="s">/post?id=</span><span class="k">${</span>post.id<span class="k">}</span><span class="s">`</span><span class="b1">}</span><span class="t">&gt;&lt;h2&gt;</span><span class="b1">{</span>post.title<span class="b1">}</span><span class="t">&lt;/h2&gt;&lt;/Link&gt;</span></div><div class="cl">                        <span class="t">&lt;p&gt;&lt;strong&gt;</span>Posted on <span class="b1">{</span>post.date<span class="b1">}</span><span class="t">&lt;/strong&gt;&lt;/p&gt;</span></div><div class="cl"></div><div class="cl">                        <span class="b1">{</span>featuredImg<span class="b1">}</span></div><div class="cl">                        <span class="b1">{</span>excerpt<span class="b1">}</span></div><div class="cl">                    <span class="t">&lt;/article&gt;</span></div><div class="cl">                <span class="b3">)</span>;</div><div class="cl">            <span class="b2">}</span><span class="b1">)</span></div><div class="cl">            <span class="k">return</span> content;</div><div class="cl">        <span class="b3">}</span> <span class="k">else</span> <span class="b3">{</span></div><div class="cl">            <span class="k">return</span> <span class="t">&lt;p&gt;</span>There are currently no <span class="b1">{</span>props.category<span class="b1">}</span> posts. <span class="t">&lt;Link</span> <span class="at">href</span>=<span class="s">&quot;/submit&quot;</span><span class="t">&gt;</span>Submit<span class="t">&lt;/Link&gt;</span> your <span class="b1">{</span>props.category<span class="b1">}</span> posts.<span class="t">&lt;/p&gt;</span>;</div><div class="cl">        <span class="b3">}</span></div><div class="cl">    <span class="b2">}</span> <span class="k">else</span> <span class="b2">{</span></div><div class="cl">        <span class="k">return</span> <span class="t">&lt;p&gt;</span>Category not found<span class="t">&lt;/p&gt;</span>;</div><div class="cl">    <span class="b2">}</span></div><div class="cl"></div><div class="cl"><span class="b1">}</span></div></div>
<div class="a hover" style="left:409px;top:66.7px;width:220px;height:28px">(property) category: string</div>
<div class="a" style="left:974px;top:21px;width:107px;height:574px;background:#fff"></div>
<div class="a" style="left:974px;top:21px;width:1px;height:574px;background:#ececec"></div>
<div class="a" style="left:975px;top:21px;width:2px;height:574px;background:#f8f8f8"></div>
<svg class="a" style="left:981px;top:21.3px" width="87" height="52" viewBox="0 0 87 52"><rect x="0.00" y="0.00" width="4.65" height="1.35" fill="#0000ff" opacity="0.6"/><rect x="5.42" y="0.00" width="0.78" height="1.35" fill="#0431fa" opacity="0.6"/><rect x="6.98" y="0.00" width="18.60" height="1.35" fill="#000000" opacity="0.42"/><rect x="26.35" y="0.00" width="10.08" height="1.35" fill="#000000" opacity="0.42"/><rect x="37.20" y="0.00" width="0.78" height="1.35" fill="#0431fa" opacity="0.6"/><rect x="38.75" y="0.00" width="3.10" height="1.35" fill="#0000ff" opacity="0.6"/><rect x="42.62" y="0.00" width="18.60" height="1.35" fill="#a31515" opacity="0.6"/><rect x="61.23" y="0.00" width="0.78" height="1.35" fill="#000000" opacity="0.42"/><rect x="0.00" y="1.55" width="4.65" height="1.35" fill="#0000ff" opacity="0.6"/><rect x="5.42" y="1.55" width="3.10" height="1.35" fill="#000000" opacity="0.42"/><rect x="9.30" y="1.55" width="3.10" height="1.35" fill="#0000ff" opacity="0.6"/><rect x="13.18" y="1.55" width="8.53" height="1.35" fill="#a31515" opacity="0.6"/><rect x="21.70" y="1.55" width="0.78" height="1.35" fill="#000000" opacity="0.42"/><rect x="0.00" y="3.10" width="4.65" height="1.35" fill="#0000ff" opacity="0.6"/><rect x="5.42" y="3.10" width="3.88" height="1.35" fill="#000000" opacity="0.42"/><rect x="10.08" y="3.10" width="3.10" height="1.35" fill="#0000ff" opacity="0.6"/><rect x="13.95" y="3.10" width="9.30" height="1.35" fill="#a31515" opacity="0.6"/><rect x="23.25" y="3.10" width="0.78" height="1.35" fill="#000000" opacity="0.42"/><rect x="0.00" y="6.20" width="4.65" height="1.35" fill="#0000ff" opacity="0.6"/><rect x="5.42" y="6.20" width="3.88" height="1.35" fill="#0000ff" opacity="0.6"/><rect x="10.08" y="6.20" width="6.20" height="1.35" fill="#0000ff" opacity="0.6"/><rect x="17.05" y="6.20" width="11.62" height="1.35" fill="#000000" opacity="0.42"/><rect x="28.68" y="6.20" width="0.78" height="1.35" fill="#0431fa" opacity="0.6"/><rect x="29.45" y="6.20" width="4.65" height="1.35" fill="#000000" opacity="0.42"/><rect x="34.88" y="6.20" width="0.78" height="1.35" fill="#319331" opacity="0.6"/><rect x="35.65" y="6.20" width="6.98" height="1.35" fill="#000000" opacity="0.42"/><rect x="43.40" y="6.20" width="4.65" height="1.35" fill="#000000" opacity="0.42"/><rect x="48.05" y="6.20" width="0.78" height="1.35" fill="#319331" opacity="0.6"/><rect x="48.83" y="6.20" width="0.78" height="1.35" fill="#0431fa" opacity="0.6"/><rect x="50.38" y="6.20" width="0.78" height="1.35" fill="#0431fa" opacity="0.6"/><rect x="3.10" y="7.75" width="3.88" height="1.35" fill="#0000ff" opacity="0.6"/><rect x="7.75" y="7.75" width="3.88" height="1.35" fill="#000000" opacity="0.42"/><rect x="12.40" y="7.75" width="0.78" height="1.35" fill="#000000" opacity="0.42"/><rect x="13.95" y="7.75" width="3.88" height="1.35" fill="#0000ff" opacity="0.6"/><rect x="18.60" y="7.75" width="10.08" height="1.35" fill="#000000" opacity="0.42"/><rect x="28.68" y="7.75" width="0.78" height="1.35" fill="#319331" opacity="0.6"/><rect x="29.45" y="7.75" width="10.85" height="1.35" fill="#000000" opacity="0.42"/><rect x="40.30" y="7.75" width="0.78" height="1.35" fill="#319331" opacity="0.6"/><rect x="41.08" y="7.75" width="0.78" height="1.35" fill="#000000" opacity="0.42"/><rect x="3.10" y="9.30" width="1.55" height="1.35" fill="#0000ff" opacity="0.6"/><rect x="5.42" y="9.30" width="0.78" height="1.35" fill="#319331" opacity="0.6"/><rect x="6.20" y="9.30" width="3.88" height="1.35" fill="#000000" opacity="0.42"/><rect x="10.85" y="9.30" width="2.33" height="1.35" fill="#000000" opacity="0.42"/><rect x="13.95" y="9.30" width="0.78" height="1.35" fill="#000000" opacity="0.42"/><rect x="14.72" y="9.30" width="0.78" height="1.35" fill="#098658" opacity="0.6"/><rect x="15.50" y="9.30" width="0.78" height="1.35" fill="#319331" opacity="0.6"/><rect x="17.05" y="9.30" width="0.78" height="1.35" fill="#319331" opacity="0.6"/><rect x="6.20" y="10.85" width="3.88" height="1.35" fill="#0000ff" opacity="0.6"/><rect x="10.85" y="10.85" width="3.88" height="1.35" fill="#000000" opacity="0.42"/><rect x="15.50" y="10.85" width="0.78" height="1.35" fill="#000000" opacity="0.42"/><rect x="17.05" y="10.85" width="3.88" height="1.35" fill="#0000ff" opacity="0.6"/><rect x="21.70" y="10.85" width="17.82" height="1.35" fill="#000000" opacity="0.42"/><rect x="39.52" y="10.85" width="0.78" height="1.35" fill="#7b3814" opacity="0.6"/><rect x="40.30" y="10.85" width="3.88" height="1.35" fill="#000000" opacity="0.42"/><rect x="44.18" y="10.85" width="0.78" height="1.35" fill="#7b3814" opacity="0.6"/><rect x="44.95" y="10.85" width="0.78" height="1.35" fill="#000000" opacity="0.42"/><rect x="6.20" y="12.40" width="1.55" height="1.35" fill="#0000ff" opacity="0.6"/><rect x="8.53" y="12.40" width="0.78" height="1.35" fill="#7b3814" opacity="0.6"/><rect x="9.30" y="12.40" width="3.88" height="1.35" fill="#000000" opacity="0.42"/><rect x="13.95" y="12.40" width="2.33" height="1.35" fill="#000000" opacity="0.42"/><rect x="17.05" y="12.40" width="3.10" height="1.35" fill="#0000ff" opacity="0.6"/><rect x="20.15" y="12.40" width="0.78" height="1.35" fill="#7b3814" opacity="0.6"/><rect x="21.70" y="12.40" width="0.78" height="1.35" fill="#7b3814" opacity="0.6"/><rect x="9.30" y="13.95" width="3.88" height="1.35" fill="#0000ff" opacity="0.6"/><rect x="13.95" y="13.95" width="5.42" height="1.35" fill="#000000" opacity="0.42"/><rect x="20.15" y="13.95" width="0.78" height="1.35" fill="#000000" opacity="0.42"/><rect x="21.70" y="13.95" width="6.98" height="1.35" fill="#000000" opacity="0.42"/><rect x="28.68" y="13.95" width="0.78" height="1.35" fill="#0431fa" opacity="0.6"/><rect x="29.45" y="13.95" width="3.10" height="1.35" fill="#000000" opacity="0.42"/><rect x="33.33" y="13.95" width="1.55" height="1.35" fill="#0000ff" opacity="0.6"/><rect x="35.65" y="13.95" width="0.78" height="1.35" fill="#319331" opacity="0.6"/><rect x="12.40" y="15.50" width="3.88" height="1.35" fill="#0000ff" opacity="0.6"/><rect x="17.05" y="15.50" width="8.53" height="1.35" fill="#000000" opacity="0.42"/><rect x="26.35" y="15.50" width="0.78" height="1.35" fill="#000000" opacity="0.42"/><rect x="27.90" y="15.50" width="13.95" height="1.35" fill="#000000" opacity="0.42"/><rect x="42.62" y="15.50" width="2.33" height="1.35" fill="#000000" opacity="0.42"/><rect x="45.73" y="15.50" width="3.10" height="1.35" fill="#0000ff" opacity="0.6"/><rect x="49.60" y="15.50" width="0.78" height="1.35" fill="#000000" opacity="0.42"/><rect x="51.15" y="15.50" width="3.88" height="1.35" fill="#800000" opacity="0.6"/><rect x="55.80" y="15.50" width="0.78" height="1.35" fill="#000000" opacity="0.42"/><rect x="57.35" y="15.50" width="4.65" height="1.35" fill="#800000" opacity="0.6"/><rect x="62.77" y="15.50" width="2.33" height="1.35" fill="#ff0000" opacity="0.6"/><rect x="65.10" y="15.50" width="0.78" height="1.35" fill="#000000" opacity="0.42"/><rect x="65.88" y="15.50" width="0.78" height="1.35" fill="#7b3814" opacity="0.6"/><rect x="66.65" y="15.50" width="17.05" height="1.35" fill="#000000" opacity="0.42"/><rect x="83.70" y="15.50" width="0.78" height="1.35" fill="#7b3814" opacity="0.6"/><rect x="85.25" y="15.50" width="2.33" height="1.35" fill="#ff0000" opacity="0.6"/><rect x="12.40" y="17.05" width="3.88" height="1.35" fill="#0000ff" opacity="0.6"/><rect x="17.05" y="17.05" width="5.42" height="1.35" fill="#000000" opacity="0.42"/><rect x="23.25" y="17.05" width="0.78" height="1.35" fill="#000000" opacity="0.42"/><rect x="24.80" y="17.05" width="9.30" height="1.35" fill="#000000" opacity="0.42"/><rect x="34.88" y="17.05" width="2.33" height="1.35" fill="#000000" opacity="0.42"/><rect x="37.98" y="17.05" width="3.10" height="1.35" fill="#0000ff" opacity="0.6"/><rect x="41.85" y="17.05" width="0.78" height="1.35" fill="#000000" opacity="0.42"/><rect x="43.40" y="17.05" width="3.88" height="1.35" fill="#800000" opacity="0.6"/><rect x="48.05" y="17.05" width="0.78" height="1.35" fill="#000000" opacity="0.42"/><rect x="49.60" y="17.05" width="2.33" height="1.35" fill="#800000" opacity="0.6"/><rect x="51.93" y="17.05" width="0.78" height="1.35" fill="#7b3814" opacity="0.6"/><rect x="52.70" y="17.05" width="9.30" height="1.35" fill="#000000" opacity="0.42"/><rect x="62.00" y="17.05" width="0.78" height="1.35" fill="#7b3814" opacity="0.6"/><rect x="62.77" y="17.05" width="3.10" height="1.35" fill="#800000" opacity="0.6"/><rect x="65.88" y="17.05" width="0.78" height="1.35" fill="#000000" opacity="0.42"/><rect x="12.40" y="18.60" width="4.65" height="1.35" fill="#0000ff" opacity="0.6"/><rect x="17.82" y="18.60" width="0.78" height="1.35" fill="#7b3814" opacity="0.6"/><rect x="15.50" y="20.15" width="6.20" height="1.35" fill="#800000" opacity="0.6"/><rect x="22.48" y="20.15" width="2.33" height="1.35" fill="#ff0000" opacity="0.6"/><rect x="24.80" y="20.15" width="0.78" height="1.35" fill="#000000" opacity="0.42"/><rect x="25.57" y="20.15" width="0.78" height="1.35" fill="#0431fa" opacity="0.6"/><rect x="26.35" y="20.15" width="5.42" height="1.35" fill="#000000" opacity="0.42"/><rect x="31.78" y="20.15" width="0.78" height="1.35" fill="#0431fa" opacity="0.6"/><rect x="33.33" y="20.15" width="6.98" height="1.35" fill="#ff0000" opacity="0.6"/><rect x="40.30" y="20.15" width="0.78" height="1.35" fill="#000000" opacity="0.42"/><rect x="41.08" y="20.15" width="0.78" height="1.35" fill="#0431fa" opacity="0.6"/><rect x="41.85" y="20.15" width="0.78" height="1.35" fill="#a31515" opacity="0.6"/><rect x="42.62" y="20.15" width="1.55" height="1.35" fill="#0000ff" opacity="0.6"/><rect x="44.18" y="20.15" width="20.15" height="1.35" fill="#000000" opacity="0.42"/><rect x="64.33" y="20.15" width="1.55" height="1.35" fill="#319331" opacity="0.6"/><rect x="65.88" y="20.15" width="0.78" height="1.35" fill="#0000ff" opacity="0.6"/><rect x="66.65" y="20.15" width="4.65" height="1.35" fill="#a31515" opacity="0.6"/><rect x="71.30" y="20.15" width="0.78" height="1.35" fill="#0431fa" opacity="0.6"/><rect x="72.08" y="20.15" width="0.78" height="1.35" fill="#800000" opacity="0.6"/><rect x="18.60" y="21.70" width="3.88" height="1.35" fill="#800000" opacity="0.6"/><rect x="23.25" y="21.70" width="3.10" height="1.35" fill="#ff0000" opacity="0.6"/><rect x="26.35" y="21.70" width="0.78" height="1.35" fill="#000000" opacity="0.42"/><rect x="27.12" y="21.70" width="0.78" height="1.35" fill="#0431fa" opacity="0.6"/><rect x="27.90" y="21.70" width="1.55" height="1.35" fill="#a31515" opacity="0.6"/><rect x="29.45" y="21.70" width="1.55" height="1.35" fill="#0000ff" opacity="0.6"/><rect x="31.00" y="21.70" width="20.15" height="1.35" fill="#000000" opacity="0.42"/><rect x="51.15" y="21.70" width="1.55" height="1.35" fill="#319331" opacity="0.6"/><rect x="52.70" y="21.70" width="0.78" height="1.35" fill="#0000ff" opacity="0.6"/><rect x="53.48" y="21.70" width="6.98" height="1.35" fill="#a31515" opacity="0.6"/><rect x="60.45" y="21.70" width="1.55" height="1.35" fill="#0000ff" opacity="0.6"/><rect x="62.00" y="21.70" width="5.42" height="1.35" fill="#000000" opacity="0.42"/><rect x="67.42" y="21.70" width="0.78" height="1.35" fill="#0000ff" opacity="0.6"/><rect x="68.20" y="21.70" width="0.78" height="1.35" fill="#a31515" opacity="0.6"/><rect x="68.98" y="21.70" width="0.78" height="1.35" fill="#0431fa" opacity="0.6"/><rect x="69.75" y="21.70" width="3.88" height="1.35" fill="#800000" opacity="0.6"/><rect x="73.62" y="21.70" width="0.78" height="1.35" fill="#0431fa" opacity="0.6"/><rect x="74.40" y="21.70" width="7.75" height="1.35" fill="#000000" opacity="0.42"/><rect x="82.15" y="21.70" width="0.78" height="1.35" fill="#0431fa" opacity="0.6"/><rect x="82.92" y="21.70" width="9.30" height="1.35" fill="#800000" opacity="0.6"/><rect x="18.60" y="23.25" width="8.53" height="1.35" fill="#800000" opacity="0.6"/><rect x="27.12" y="23.25" width="4.65" height="1.35" fill="#000000" opacity="0.42"/><rect x="32.55" y="23.25" width="1.55" height="1.35" fill="#000000" opacity="0.42"/><rect x="34.88" y="23.25" width="0.78" height="1.35" fill="#0431fa" opacity="0.6"/><rect x="35.65" y="23.25" width="6.98" height="1.35" fill="#000000" opacity="0.42"/><rect x="42.62" y="23.25" width="0.78" height="1.35" fill="#0431fa" opacity="0.6"/><rect x="43.40" y="23.25" width="10.08" height="1.35" fill="#800000" opacity="0.6"/><rect x="18.60" y="26.35" width="0.78" height="1.35" fill="#0431fa" opacity="0.6"/><rect x="19.38" y="26.35" width="8.53" height="1.35" fill="#000000" opacity="0.42"/><rect x="27.90" y="26.35" width="0.78" height="1.35" fill="#0431fa" opacity="0.6"/><rect x="18.60" y="27.90" width="0.78" height="1.35" fill="#0431fa" opacity="0.6"/><rect x="19.38" y="27.90" width="5.42" height="1.35" fill="#000000" opacity="0.42"/><rect x="24.80" y="27.90" width="0.78" height="1.35" fill="#0431fa" opacity="0.6"/><rect x="15.50" y="29.45" width="7.75" height="1.35" fill="#800000" opacity="0.6"/><rect x="12.40" y="31.00" width="0.78" height="1.35" fill="#7b3814" opacity="0.6"/><rect x="13.18" y="31.00" width="0.78" height="1.35" fill="#000000" opacity="0.42"/><rect x="9.30" y="32.55" width="0.78" height="1.35" fill="#319331" opacity="0.6"/><rect x="10.08" y="32.55" width="0.78" height="1.35" fill="#0431fa" opacity="0.6"/><rect x="9.30" y="34.10" width="4.65" height="1.35" fill="#0000ff" opacity="0.6"/><rect x="14.72" y="34.10" width="6.20" height="1.35" fill="#000000" opacity="0.42"/><rect x="6.20" y="35.65" width="0.78" height="1.35" fill="#7b3814" opacity="0.6"/><rect x="7.75" y="35.65" width="3.10" height="1.35" fill="#0000ff" opacity="0.6"/><rect x="11.62" y="35.65" width="0.78" height="1.35" fill="#7b3814" opacity="0.6"/><rect x="9.30" y="37.20" width="4.65" height="1.35" fill="#0000ff" opacity="0.6"/><rect x="14.72" y="37.20" width="2.33" height="1.35" fill="#800000" opacity="0.6"/><rect x="17.05" y="37.20" width="3.88" height="1.35" fill="#000000" opacity="0.42"/><rect x="21.70" y="37.20" width="2.33" height="1.35" fill="#000000" opacity="0.42"/><rect x="24.80" y="37.20" width="6.98" height="1.35" fill="#000000" opacity="0.42"/><rect x="32.55" y="37.20" width="1.55" height="1.35" fill="#000000" opacity="0.42"/><rect x="34.88" y="37.20" width="0.78" height="1.35" fill="#0431fa" opacity="0.6"/><rect x="35.65" y="37.20" width="10.85" height="1.35" fill="#000000" opacity="0.42"/><rect x="46.50" y="37.20" width="0.78" height="1.35" fill="#0431fa" opacity="0.6"/><rect x="48.05" y="37.20" width="4.65" height="1.35" fill="#000000" opacity="0.42"/><rect x="53.48" y="37.20" width="3.88" height="1.35" fill="#800000" opacity="0.6"/><rect x="58.12" y="37.20" width="3.10" height="1.35" fill="#ff0000" opacity="0.6"/><rect x="61.23" y="37.20" width="0.78" height="1.35" fill="#000000" opacity="0.42"/><rect x="62.00" y="37.20" width="6.98" height="1.35" fill="#a31515" opacity="0.6"/><rect x="68.98" y="37.20" width="0.78" height="1.35" fill="#800000" opacity="0.6"/><rect x="69.75" y="37.20" width="4.65" height="1.35" fill="#000000" opacity="0.42"/><rect x="74.40" y="37.20" width="5.42" height="1.35" fill="#800000" opacity="0.6"/><rect x="80.60" y="37.20" width="3.10" height="1.35" fill="#000000" opacity="0.42"/><rect x="84.48" y="37.20" width="0.78" height="1.35" fill="#0431fa" opacity="0.6"/><rect x="85.25" y="37.20" width="10.85" height="1.35" fill="#000000" opacity="0.42"/><rect x="6.20" y="38.75" width="0.78" height="1.35" fill="#7b3814" opacity="0.6"/><rect x="3.10" y="40.30" width="0.78" height="1.35" fill="#319331" opacity="0.6"/><rect x="4.65" y="40.30" width="3.10" height="1.35" fill="#0000ff" opacity="0.6"/><rect x="8.53" y="40.30" width="0.78" height="1.35" fill="#319331" opacity="0.6"/><rect x="6.20" y="41.85" width="4.65" height="1.35" fill="#0000ff" opacity="0.6"/><rect x="11.62" y="41.85" width="2.33" height="1.35" fill="#800000" opacity="0.6"/><rect x="13.95" y="41.85" width="6.20" height="1.35" fill="#000000" opacity="0.42"/><rect x="20.93" y="41.85" width="2.33" height="1.35" fill="#000000" opacity="0.42"/><rect x="24.03" y="41.85" width="3.88" height="1.35" fill="#000000" opacity="0.42"/><rect x="27.90" y="41.85" width="3.10" height="1.35" fill="#800000" opacity="0.6"/><rect x="31.00" y="41.85" width="0.78" height="1.35" fill="#000000" opacity="0.42"/><rect x="3.10" y="43.40" width="0.78" height="1.35" fill="#319331" opacity="0.6"/><rect x="0.00" y="46.50" width="0.78" height="1.35" fill="#0431fa" opacity="0.6"/></svg>
<div class="a" style="left:1068px;top:21px;width:1px;height:574px;background:#efefef"></div>
<div class="a" style="left:1068px;top:21px;width:13px;height:292.5px;background:rgba(100,100,100,.4)"></div>
<div class="a" style="left:1068px;top:21px;width:13px;height:2px;background:#6a6a6a"></div>
<div class="a" style="left:66px;top:584px;width:523px;height:11px;background:rgba(100,100,100,.4)"></div>
</div>
<div id="panel" class="a">
<div class="a" style="left:19.40px;top:11.82px;font-size:10.6px;line-height:10.6px;letter-spacing:-0.888px;color:#6f6f6f;white-space:nowrap;">PROBLEMS</div>
<div class="a" style="left:94.60px;top:11.82px;font-size:10.6px;line-height:10.6px;letter-spacing:-0.713px;color:#6f6f6f;white-space:nowrap;">OUTPUT</div>
<div class="a" style="left:158.00px;top:11.82px;font-size:10.6px;line-height:10.6px;letter-spacing:-0.806px;color:#6f6f6f;white-space:nowrap;">DEBUG CONSOLE</div>
<div class="a" style="left:264.00px;top:11.82px;font-size:10.6px;line-height:10.6px;letter-spacing:-0.550px;color:#424242;white-space:nowrap;">TERMINAL</div>
<div class="a" style="left:336.80px;top:11.82px;font-size:10.6px;line-height:10.6px;letter-spacing:-1.125px;color:#6f6f6f;white-space:nowrap;">PORTS</div>
<div class="a" style="left:262px;top:26.2px;width:53px;height:1px;background:#424242"></div>
<svg class="a" style="left:890.8px;top:10.8px" width="16" height="14" viewBox="0 0 16 14"><path d="M2.3.6h12.6c.3 0 .5.3.4.6l-2.3 11.6c-.1.3-.3.6-.7.6H.8c-.3 0-.5-.3-.4-.6L2.7 1.2c0-.3.3-.6.6-.6z" fill="none" stroke="#424242" stroke-width="1.05"/><path d="M4.2 4.3 6.6 6.3 4 8.3M6.8 10h3.6" fill="none" stroke="#424242" stroke-width="1"/></svg>
<div class="a" style="left:910.50px;top:12.73px;font-size:12.0px;line-height:12.0px;letter-spacing:-0.549px;color:#424242;white-space:nowrap;">node</div>
<svg class="a" style="left:944.0px;top:11.7px" width="13" height="13" viewBox="0 0 13 13"><path d="M6.5 0v13M0 6.5h13" stroke="#424242" stroke-width="1.1"/></svg>
<svg class="a" style="left:961.0px;top:16.0px" width="8" height="5" viewBox="0 0 8 5"><path d="M.4.4 4 4 7.6.4" fill="none" stroke="#424242" stroke-width="1"/></svg>
<svg class="a" style="left:980.0px;top:10.8px" width="14" height="14" viewBox="0 0 14 14"><rect x=".6" y=".6" width="12.8" height="12.8" rx="1" fill="none" stroke="#424242" stroke-width="1.1"/><path d="M7 1v12" stroke="#424242" stroke-width="1.1"/></svg>
<svg class="a" style="left:1003.0px;top:16.0px" width="13" height="3" viewBox="0 0 13 3"><circle cx="1.5" cy="1.5" r="1.1" fill="#424242"/><circle cx="6.5" cy="1.5" r="1.1" fill="#424242"/><circle cx="11.5" cy="1.5" r="1.1" fill="#424242"/></svg>
<svg class="a" style="left:1028.5px;top:14.0px" width="12" height="7" viewBox="0 0 12 7"><path d="M.5 6.5 6 1l5.5 5.5" fill="none" stroke="#424242" stroke-width="1.1"/></svg>
<svg class="a" style="left:1053.8px;top:12.4px" width="10" height="10" viewBox="0 0 10 10"><path d="M.5.5l9 9M9.5.5l-9 9" stroke="#424242" stroke-width="1.1"/></svg>
<div class="a term" style="left:19.40px;top:48.10px"><div>   Compiled /art in 968ms (732 modules)</div><div> GET /art <span style="color:#108a00">200</span> in 3548ms</div><div> GET /art <span style="color:#108a00">200</span> in 1265ms</div></div>
<div class="a" style="left:19.40px;top:96.30px;width:7px;height:16px;border:1px solid #222"></div>
<svg class="a" style="left:26.40px;top:48.90px" width="10" height="10.5" viewBox="0 0 10 10.5"><path d="M.8 6.2 3.3 9.6 9.3.6" fill="none" stroke="#1f9a3c" stroke-width="1.5"/></svg>
<div class="a" style="left:1068px;top:45px;width:1px;height:68px;background:#e8e8e8"></div>
<div class="a" style="left:1068px;top:45px;width:13px;height:1px;background:#e8e8e8"></div>
<div class="a" style="left:1068.5px;top:82.3px;width:4px;height:6px;background:#1a85d8"></div>
<div class="a" style="left:1068.5px;top:93.0px;width:4px;height:6px;background:#c8c8c8"></div>
</div>
<div id="status" class="a">
<div class="a" style="left:0;top:0;width:33px;height:21px;background:#16825d"></div>
<svg class="a" style="left:11px;top:3.5px" width="11" height="12.5" viewBox="0 0 11 12.5"><path d="M1.1 4.2 5.9 7.9 1.1 11.7M10 .7 5.9 4.5 10 8.2" fill="none" stroke="#fff" stroke-width="1.1"/></svg>
<svg class="a" style="left:39px;top:3.0px" width="13" height="15" viewBox="0 0 13 15"><circle cx="3.7" cy="2.4" r="1.8" fill="none" stroke="#fff" stroke-width="1.1"/><circle cx="3.7" cy="12.6" r="1.8" fill="none" stroke="#fff" stroke-width="1.1"/><circle cx="10" cy="5.3" r="1.8" fill="none" stroke="#fff" stroke-width="1.1"/><path d="M3.7 4.2v6.6M10 7.1c0 2.5-1.5 2.3-4.5 2.5-1.2.1-1.8.5-1.8 1.2" fill="none" stroke="#fff" stroke-width="1.1"/></svg>
<div class="a" style="left:55.10px;top:5.19px;font-size:11.6px;line-height:11.6px;letter-spacing:0.163px;color:#fff;white-space:nowrap;">licton-springs-review-nextjs-20-69-load-audio-page-content*</div>
<svg class="a" style="left:378.5px;top:5.5px" width="13" height="11" viewBox="0 0 13 11"><path d="M3.5 9H3a2.5 2.5 0 0 1-.3-5A3.7 3.7 0 0 1 9.8 3 2.9 2.9 0 0 1 10 9h-.5" fill="none" stroke="#fff" stroke-width="1.05"/><path d="M6.5 10.5V5.3M4.5 7.2l2-2 2 2" fill="none" stroke="#fff" stroke-width="1.05"/></svg>
<svg class="a" style="left:405.4px;top:4.5px" width="12.5" height="12.5" viewBox="0 0 13 13"><circle cx="6.5" cy="6.5" r="5.9" fill="none" stroke="#fff" stroke-width="1.05"/><path d="M4.2 4.2l4.6 4.6M8.8 4.2 4.2 8.8" stroke="#fff" stroke-width="1.05"/></svg>
<div class="a" style="left:421.00px;top:5.19px;font-size:11.6px;line-height:11.6px;letter-spacing:-0.452px;color:#fff;white-space:nowrap;">0</div>
<svg class="a" style="left:431.6px;top:4.5px" width="12.5" height="12" viewBox="0 0 13 12"><path d="M6.5.7.7 11.3h11.6z" fill="none" stroke="#fff" stroke-width="1.05" stroke-linejoin="round"/><path d="M6.5 4.5v3.5M6.5 9v1" stroke="#fff" stroke-width="1.1"/></svg>
<div class="a" style="left:447.30px;top:5.19px;font-size:11.6px;line-height:11.6px;letter-spacing:-0.452px;color:#fff;white-space:nowrap;">0</div>
<div class="a" style="left:968.20px;top:5.19px;font-size:11.6px;line-height:11.6px;letter-spacing:-0.337px;color:#fff;white-space:nowrap;">Ln 1, Col 1</div>
<div class="a" style="left:1036.70px;top:5.19px;font-size:11.6px;line-height:11.6px;letter-spacing:-0.521px;color:#fff;white-space:nowrap;">Spaces: 4</div>
<div class="a" style="left:1100.00px;top:5.19px;font-size:11.6px;line-height:11.6px;letter-spacing:-0.533px;color:#fff;white-space:nowrap;">UTF-8</div>
<div class="a" style="left:1146.00px;top:5.19px;font-size:11.6px;line-height:11.6px;letter-spacing:-1.448px;color:#fff;white-space:nowrap;">CRLF</div>
<div class="a" style="left:1204.30px;top:5.19px;font-size:11.6px;line-height:11.6px;letter-spacing:-0.471px;color:#fff;white-space:nowrap;">TypeScript JSX</div>
<div class="a" style="left:1337.20px;top:5.19px;font-size:11.6px;line-height:11.6px;letter-spacing:-0.382px;color:#fff;white-space:nowrap;">Go Live</div>
<div class="a" style="left:1406.70px;top:5.19px;font-size:11.6px;line-height:11.6px;letter-spacing:0.039px;color:#fff;white-space:nowrap;">Prettier</div>
<svg class="a" style="left:1186.3px;top:4.5px" width="13" height="13" viewBox="0 0 13 13"><path d="M3.5.8C2.3.8 2 1.4 2 2.5v2.2c0 .9-.5 1.6-1.4 1.6.9 0 1.4.7 1.4 1.6v2.3c0 1.1.3 1.7 1.5 1.7M9.5.8c1.2 0 1.5.6 1.5 1.7v1.5" fill="none" stroke="#fff" stroke-width="1"/><circle cx="9.6" cy="9.6" r="2" fill="none" stroke="#fff" stroke-width="1.1"/><path d="M9.6 5.5v2" stroke="#fff" stroke-width="1"/></svg>
<svg class="a" style="left:1291px;top:4.3px" width="14" height="12" viewBox="0 0 17 15"><path d="M4.5 1.3h2.6c1.6 0 2.5 1 2.5 2.5V5c0 1.4-1 2.4-2.5 2.4H4.3C2.8 7.4 2 6.5 2 5.1V3.8c0-1.5 1-2.5 2.5-2.5ZM10 1.3h2.5c1.5 0 2.5 1 2.5 2.5v1.3c0 1.4-.8 2.3-2.3 2.3H10" fill="none" stroke="#fff" stroke-width="1.6"/><path d="M2 6.5C.8 7 .8 8.3.8 9.3c0 2.6 3.2 4.4 7.7 4.4s7.7-1.8 7.7-4.4c0-1 0-2.3-1.2-2.8" fill="#fff" stroke="#fff" stroke-width="1.5"/><path d="M6.8 9v2M10.2 9v2" stroke="#007acc" stroke-width="1.4"/></svg>
<svg class="a" style="left:1321.4px;top:4.5px" width="12" height="13" viewBox="0 0 12 13"><path d="M2.2 9.3a5 5 0 1 1 7.6 0M3.8 7.8a2.8 2.8 0 1 1 4.4 0" fill="none" stroke="#fff" stroke-width="1.1"/><circle cx="6" cy="5.8" r="1.1" fill="#fff"/><path d="M6 7v5.5" stroke="#fff" stroke-width="1.6"/></svg>
<svg class="a" style="left:1389.6px;top:5.5px" width="14" height="11" viewBox="0 0 14 11"><path d="M.5 6.5 3 9.5 9.5 1M5.5 8l1.5 1.5L13.5 1" fill="none" stroke="#fff" stroke-width="1.1"/></svg>
<svg class="a" style="left:1461.8px;top:4.5px" width="11.5" height="13" viewBox="0 0 12 13"><path d="M6 .8c2.3 0 3.8 1.7 3.8 4v3l1.5 2H.7l1.5-2v-3C2.2 2.5 3.7.8 6 .8zM4.5 11.2a1.5 1.5 0 0 0 3 0" fill="none" stroke="#fff" stroke-width="1.05"/></svg>
</div>
<div id="task" class="a">
<div class="a" style="left:240px;top:0;width:47.3px;height:39px;background:rgba(255,255,255,.45)"></div>
<div class="a" style="left:195.6px;top:36.7px;width:32.2px;height:2.3px;background:#1a5fb4"></div>
<div class="a" style="left:227.8px;top:36.7px;width:8.1px;height:2.3px;background:#7aa3cf"></div>
<div class="a" style="left:240px;top:36.7px;width:47.3px;height:2.3px;background:#1a5fb4"></div>
<svg class="a" style="left:15px;top:11.7px" width="16.5" height="15.5" viewBox="0 0 16.5 15.5"><path d="M0 2.2 6.8 1.2V7.3H0zM7.7 1.1 16.5 0V7.3H7.7zM0 8.2h6.8v6.1L0 13.3zM7.7 8.2h8.8v7.3L7.7 14.4z" fill="#000"/></svg>
<svg class="a" style="left:61px;top:11.5px" width="17" height="16" viewBox="0 0 17 16"><path d="M1.3.5v15M11.3.5v15M1.3 2.8h10" fill="none" stroke="#111" stroke-width="1.1"/><path d="M1.3 11.6h10" stroke="#222" stroke-width="1.7"/><path d="M15.3.5v15" stroke="#111" stroke-width="1"/><circle cx="15.3" cy="6.2" r="1.2" fill="#111"/></svg>
<svg class="a" style="left:109px;top:6.5px" width="22" height="25" viewBox="0 0 22 25"><path d="M4.2 6.8A8.3 8.3 0 1 1 12.5 18.5" fill="none" stroke="#e03c0a" stroke-width="2.3"/><path d="M4.3 9.5A8.3 8.3 0 0 0 5 14" fill="none" stroke="#e03c0a" stroke-width="1"/><path d="M13.2 1.5c1.6 2.2 1.4 5.5 0 8.5l-3 6.8-.8-.6 1.2-7.5z" fill="#c4c4c4"/><path d="M12.3 11.2l3.6-3.8 1 1.3-4 4z" fill="#a8a8a8"/><path d="M10.5 16.8 7 18.6M11.5 17.2l.8 2.6" stroke="#1565c0" stroke-width="1.3"/><circle cx="4.2" cy="19.6" r="2.6" fill="none" stroke="#0e63c6" stroke-width="1.8"/><circle cx="12.7" cy="22" r="2.6" fill="none" stroke="#29a3e8" stroke-width="1.8"/></svg>
<svg class="a" style="left:157px;top:10.0px" width="21" height="17.5" viewBox="0 0 21 17.5"><path d="M0 1.2C0 .5.5 0 1.2 0h5.3l2 2.2H0z" fill="#e6a817"/><path d="M0 2.5h21v15H0z" fill="#f8d775"/><path d="M0 4.2h21v13.3H0z" fill="#fbd95f"/><path d="M5.5 10.5h10v7h-2.5V13h-5v4.5H5.5z" fill="#2a7ad5"/></svg>
<svg class="a" style="left:203.6px;top:8px" width="23.5" height="23.5" viewBox="0 0 48 48"><path d="M24 4a20 20 0 0 1 17.3 10H24a10 10 0 0 0-8.7 5L8.6 8.5A20 20 0 0 1 24 4z" fill="#db4437"/><path d="M41.3 14A20 20 0 0 1 26 43.9L34.7 29a10 10 0 0 0-.1-15z" fill="#fcc934"/><path d="M8.6 8.5 15.3 19a10 10 0 0 0 0 10 10 10 0 0 0 11 4.9L26 43.9A20 20 0 0 1 8.6 8.5z" fill="#0f9d58"/><circle cx="24" cy="24" r="9" fill="#fff"/><circle cx="24" cy="24" r="7.2" fill="#4285f4"/></svg>
<svg class="a" style="left:251.6px;top:8px" width="23.6" height="23.3" viewBox="0 0 100 100"><path fill="#0065a9" d="M96.5 10.8 75.9.9a6.2 6.2 0 0 0-7.1 1.2L29.4 38 12.2 25a4.1 4.1 0 0 0-5.3.2L1.4 30.3a4.1 4.1 0 0 0 0 6.1L16.3 50 1.4 63.6a4.1 4.1 0 0 0 0 6.1l5.5 5a4.1 4.1 0 0 0 5.3.2l17.2-13 39.4 35.9a6.2 6.2 0 0 0 7.1 1.2l20.6-9.9a6.2 6.2 0 0 0 3.5-5.6V16.4a6.2 6.2 0 0 0-3.5-5.6ZM75 72.7 45.1 50 75 27.3Z"/><path fill="#1f9cf0" d="M75.9 99.1a6.2 6.2 0 0 1-7.1-1.2c2.3 2.3 6.2.7 6.2-2.6V4.7c0-3.3-3.9-4.9-6.2-2.6a6.2 6.2 0 0 1 7.1-1.2l20.6 9.9a6.2 6.2 0 0 1 3.5 5.6v67.2a6.2 6.2 0 0 1-3.5 5.6Z"/></svg>
<svg class="a" style="left:1156px;top:16.2px" width="13.5" height="8" viewBox="0 0 13.5 8"><path d="M.5 7.5 6.75 1.2 13 7.5" fill="none" stroke="#111" stroke-width="1.1"/></svg>
<svg class="a" style="left:1188px;top:12.5px" width="13" height="15" viewBox="0 0 13 15"><path d="M1 3.5C1 2 2 1.2 3.5 1.2h3C8 1.2 9 2 9 3.5v6C9 11 8 11.8 6.5 11.8h-3C2 11.8 1 11 1 9.5z" fill="none" stroke="#222" stroke-width="1.05"/><path d="M9 5.5l3-2v6.5l-3-2" fill="none" stroke="#222" stroke-width="1.05"/><path d="M.5 14c2-1 7-1 9 0" fill="none" stroke="#666" stroke-width=".9"/></svg>
<svg class="a" style="left:1216.7px;top:12.0px" width="16" height="16" viewBox="0 0 16 16"><path d="M.5 1h14v12H.5z" fill="none" stroke="#222" stroke-width="1.05"/><path d="M2 1v12" stroke="#222" stroke-width="1"/><path d="M10 4.5 7 4.5 5.5 6.5 7 9" fill="none" stroke="#222" stroke-width="1"/><circle cx="12.5" cy="12.5" r="3" fill="#2c7be5"/></svg>
<svg class="a" style="left:1247.6px;top:15.5px" width="16" height="11.5" viewBox="0 0 16 11.5"><rect x=".5" y="1" width="13.5" height="7.5" fill="none" stroke="#222" stroke-width="1"/><rect x="1.5" y="2" width="5" height="5.5" fill="#222"/><path d="M14 3.5h1.5v3H14" fill="#222"/><circle cx="11.5" cy="8" r="3.5" fill="#16a34a"/><path d="M10 8l1.2 1.2L13 7" fill="none" stroke="#fff" stroke-width="1"/></svg>
<svg class="a" style="left:1280.3px;top:14.4px" width="14.5" height="12" viewBox="0 0 14.5 12"><path d="M.6 11.5A11 11 0 0 1 11.5.6M3.2 11.5A8.3 8.3 0 0 1 11.5 3.2M5.8 11.5a5.7 5.7 0 0 1 5.7-5.7M8.4 11.5a3.1 3.1 0 0 1 3.1-3.1" fill="none" stroke="#333" stroke-width=".95"/><circle cx="11.7" cy="11" r="1.2" fill="#111"/></svg>
<svg class="a" style="left:1308.8px;top:13.2px" width="17.5" height="14" viewBox="0 0 17.5 14"><path d="M.5 4.5h2.8L7 1v12L3.3 9.5H.5z" fill="none" stroke="#222" stroke-width="1.05"/><path d="M9.5 4.5a3 3 0 0 1 0 5M12 2.5a6 6 0 0 1 0 9M14.5.8a8.5 8.5 0 0 1 0 12.4" fill="none" stroke="#9a9a9a" stroke-width="1"/></svg>
<svg class="a" style="left:1343.5px;top:12.0px" width="17.5" height="15" viewBox="0 0 17.5 15"><path d="M1.5 14c1-3 2-5 4-7.5l5-6c1-1 2.5-.5 2.3.8L11 5c1.5-.5 3.5-.2 5 1-1.5 0-3 .5-4 1.5L7 12.5c-1 1-2.5.5-2.3-.7L6 8" fill="none" stroke="#222" stroke-width="1.2"/></svg>
<div class="a" style="left:1382.00px;top:5.36px;font-size:11.8px;line-height:11.8px;letter-spacing:-0.554px;color:#111;white-space:nowrap;">11:30 PM</div>
<div class="a" style="left:1378.50px;top:22.66px;font-size:11.8px;line-height:11.8px;letter-spacing:-0.111px;color:#111;white-space:nowrap;">3/24/2025</div>
<svg class="a" style="left:1448px;top:11.6px" width="24" height="24" viewBox="0 0 24 24"><path d="M1 1h15.5v11H6l-3 3v-3H1z" fill="#000"/><path d="M3.5 3.8h10M3.5 6.3h10M3.5 8.8h7" stroke="#fff" stroke-width=".9"/><circle cx="15.5" cy="17" r="6" fill="#e4e4ea" stroke="#555" stroke-width="1"/><text x="15.6" y="20.8" font-family="Liberation Sans" font-size="10" text-anchor="middle" fill="#111">1</text></svg>
<div class="a" style="left:1483.5px;top:4px;width:1px;height:35px;background:#9da3ab"></div>
</div>
</body></html>
